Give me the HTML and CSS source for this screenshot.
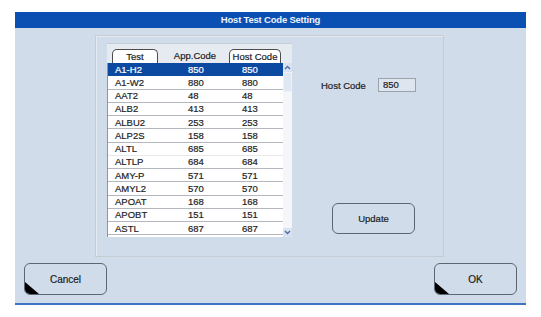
FILE: index.html
```
<!DOCTYPE html>
<html>
<head>
<meta charset="utf-8">
<link rel="stylesheet" href="styles.css">
</head>
<body>
<div class="window">
  <div class="titlebar">Host Test Code Setting</div>
  <div class="body">
    <div class="panel">
      <div class="table">
        <div class="thead">
          <div class="th tab c1">Test</div>
          <div class="th c2">App.Code</div>
          <div class="th tab c3">Host Code</div>
        </div>
        <div class="tbody">
          <div class="rows">
            <div class="row sel"><span class="c1">A1-H2</span><span class="c2">850</span><span class="c3">850</span></div>
            <div class="row"><span class="c1">A1-W2</span><span class="c2">880</span><span class="c3">880</span></div>
            <div class="row"><span class="c1">AAT2</span><span class="c2">48</span><span class="c3">48</span></div>
            <div class="row"><span class="c1">ALB2</span><span class="c2">413</span><span class="c3">413</span></div>
            <div class="row"><span class="c1">ALBU2</span><span class="c2">253</span><span class="c3">253</span></div>
            <div class="row"><span class="c1">ALP2S</span><span class="c2">158</span><span class="c3">158</span></div>
            <div class="row nb"><span class="c1">ALTL</span><span class="c2">685</span><span class="c3">685</span></div>
            <div class="row"><span class="c1">ALTLP</span><span class="c2">684</span><span class="c3">684</span></div>
            <div class="row"><span class="c1">AMY-P</span><span class="c2">571</span><span class="c3">571</span></div>
            <div class="row"><span class="c1">AMYL2</span><span class="c2">570</span><span class="c3">570</span></div>
            <div class="row"><span class="c1">APOAT</span><span class="c2">168</span><span class="c3">168</span></div>
            <div class="row"><span class="c1">APOBT</span><span class="c2">151</span><span class="c3">151</span></div>
            <div class="row"><span class="c1">ASTL</span><span class="c2">687</span><span class="c3">687</span></div>
          </div>
          <div class="scrollbar">
            <div class="sb-btn"><svg width="7" height="5" viewBox="0 0 7 5"><path d="M1 4 L3.5 1.5 L6 4" fill="none" stroke="#4a6aa8" stroke-width="1.3"/></svg></div>
            <div class="sb-thumb"></div>
            <div class="sb-track"></div>
            <div class="sb-btn"><svg width="7" height="5" viewBox="0 0 7 5"><path d="M1 1 L3.5 3.5 L6 1" fill="none" stroke="#4a6aa8" stroke-width="1.3"/></svg></div>
          </div>
        </div>
      </div>
      <div class="side">
        <div class="hostrow">
          <span class="label">Host Code</span>
          <div class="input">850</div>
        </div>
        <button class="btn update">Update</button>
      </div>
    </div>
    <div class="footer">
      <button class="btn big">Cancel<span class="corner"></span></button>
      <button class="btn big">OK<span class="corner"></span></button>
    </div>
  </div>
</div>
</body>
</html>
```

FILE: styles.css
```
* { box-sizing: border-box; }
html, body { margin: 0; padding: 0; background: #ffffff; }
body {
  width: 541px;
  height: 317px;
  font-family: "Liberation Sans", Arial, sans-serif;
  color: #1c1c1c;
  padding: 12px 0 0 15px;
}
.window {
  width: 511px;
  height: 293px;
  display: flex;
  flex-direction: column;
  background: #d1dcea;
  border-bottom: 2px solid #3f74c4;
}
.titlebar {
  height: 16px;
  background: #0a50b2;
  color: #eef3fb;
  font-size: 9.5px;
  font-weight: bold;
  letter-spacing: -0.2px;
  text-align: center;
  line-height: 16px;
  flex: none;
}
.body {
  flex: 1;
  display: flex;
  flex-direction: column;
  padding: 7px 0 0 0;
}
.panel {
  margin-left: 80px;
  width: 349px;
  height: 222px;
  border: 1px solid #c6ccd4;
  box-shadow: inset 1px 1px 0 #e4eaf2;
  display: flex;
  padding: 7px 0 0 11px;
}
.table {
  width: 185px;
  height: 194px;
  background: #e6ebf2;
  border-top: 1px solid #c9ced6;
  display: flex;
  flex-direction: column;
}
.thead {
  height: 19px;
  display: flex;
  align-items: flex-end;
  font-size: 9.5px;
  -webkit-text-stroke: 0.2px #1c1c1c;
}
.th {
  height: 14px;
  line-height: 13px;
  text-align: center;
}
.tab {
  background: #ffffff;
  border: 1px solid #4c4c4c;
  border-bottom: none;
  border-radius: 5px 5px 0 0;
}
.thead .c1 { margin-left: 5px; width: 46px; }
.thead .c2 { margin-left: 14px; width: 46px; }
.thead .c3 { margin-left: 11px; width: 52px; }
.tbody {
  flex: 1;
  display: flex;
  background: #ffffff;
  border-left: 1px solid #8a96a8;
}
.rows {
  width: 175px;
  display: flex;
  flex-direction: column;
}
.row {
  height: 13.25px;
  display: flex;
  align-items: center;
  font-size: 9.5px;
  border-bottom: 1px solid #b4b8be;
  color: #1e1e1e;
  -webkit-text-stroke: 0.2px #1e1e1e;
}
.row.nb { border-bottom-color: #e8e8e8; }
.row.sel {
  background: #0c4aa2;
  color: #ffffff;
  border-bottom-color: #0c4aa2;
  -webkit-text-stroke: 0.2px #ffffff;
}
.row span { display: block; }
.row .c1 { width: 80px; padding-left: 7px; }
.row .c2 { width: 54px; }
.row .c3 { width: 40px; }
.scrollbar {
  width: 9px;
  display: flex;
  flex-direction: column;
  background: #f4f6f9;
}
.sb-btn {
  height: 9px;
  background: #d8e2f0;
  display: flex;
  align-items: center;
  justify-content: center;
}
.sb-thumb {
  height: 20px;
  background: #dfe7f2;
  border: 1px solid #eef2f8;
}
.sb-track { flex: 1; }
.side {
  flex: 1;
  display: flex;
  flex-direction: column;
  padding-left: 29px;
}
.hostrow {
  margin-top: 35px;
  display: flex;
  align-items: center;
  height: 14px;
  -webkit-text-stroke: 0.2px #1c1c1c;
}
.label {
  font-size: 9.5px;
  width: 57px;
}
.input {
  width: 38px;
  height: 14px;
  border: 1px solid #9aa2ac;
  background: #dfe5ee;
  font-size: 9.5px;
  line-height: 12px;
  padding-left: 4px;
}
.btn {
  font-family: "Liberation Sans", Arial, sans-serif;
  background: #d1dcea;
  border: 1px solid #5e6672;
  border-radius: 6px;
  color: #1c1c1c;
  padding: 0;
  position: relative;
  overflow: hidden;
  -webkit-text-stroke: 0.2px #1c1c1c;
}
.update {
  margin-top: 111px;
  margin-left: 11px;
  width: 83px;
  height: 31px;
  font-size: 9.5px;
}
.footer {
  display: flex;
  justify-content: space-between;
  padding: 0 9px;
  margin-top: 6px;
}
.big {
  width: 83px;
  height: 32px;
  font-size: 10px;
}
.corner {
  position: absolute;
  left: 0;
  bottom: 0;
  width: 0;
  height: 0;
  border-left: 14px solid #000000;
  border-top: 12px solid transparent;
}
```
